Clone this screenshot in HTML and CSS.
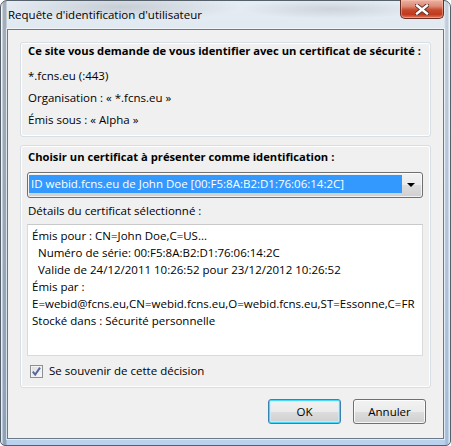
FILE: index.html
```html
<!DOCTYPE html>
<html lang="fr">
<head>
<meta charset="utf-8">
<title>Requête d'identification d'utilisateur</title>
<link rel="stylesheet" href="styles.css">
</head>
<body>
<div class="window">
  <div class="titlebar">
    <span class="title">Requête d'identification d'utilisateur</span>
    <div class="close">
      <svg width="14" height="11" viewBox="0 0 14 11">
        <path d="M2 1.5 L12 9.5 M12 1.5 L2 9.5" stroke="#5a2a22" stroke-width="4.2" stroke-linecap="square" fill="none"/>
        <path d="M2 1.5 L12 9.5 M12 1.5 L2 9.5" stroke="#ffffff" stroke-width="2.4" stroke-linecap="square" fill="none"/>
      </svg>
    </div>
  </div>
  <div class="client">
    <div class="group group-site">
      <div class="head">Ce site vous demande de vous identifier avec un certificat de sécurité :</div>
      <div class="line first">*.fcns.eu (:443)</div>
      <div class="line">Organisation : « *.fcns.eu »</div>
      <div class="line">Émis sous : « Alpha »</div>
    </div>
    <div class="group group-cert">
      <div class="head">Choisir un certificat à présenter comme identification :</div>
      <div class="combo">
        <div class="selection">ID webid.fcns.eu de John Doe [00:F5:8A:B2:D1:76:06:14:2C]</div>
        <div class="arrow"></div>
      </div>
      <div class="label">Détails du certificat sélectionné :</div>
      <div class="details">
        <div>Émis pour : CN=John Doe,C=US...</div>
        <div class="indent">Numéro de série: 00:F5:8A:B2:D1:76:06:14:2C</div>
        <div class="indent">Valide de 24/12/2011 10:26:52 pour 23/12/2012 10:26:52</div>
        <div>Émis par :</div>
        <div>E=webid@fcns.eu,CN=webid.fcns.eu,O=webid.fcns.eu,ST=Essonne,C=FR</div>
        <div>Stocké dans : Sécurité personnelle</div>
      </div>
      <div class="check">
        <span class="box">
          <svg width="11" height="11" viewBox="0 0 11 11">
            <path d="M1.8 5.6 L4.2 8.6 L9 1.6" stroke="#55679c" stroke-width="1.9" fill="none"/>
          </svg>
        </span>
        <span>Se souvenir de cette décision</span>
      </div>
    </div>
    <div class="buttons">
      <div class="btn default">OK</div>
      <div class="btn">Annuler</div>
    </div>
  </div>
</div>
</body>
</html>
```
FILE: styles.css
```css
html, body {
  margin: 0;
  padding: 0;
  background: #ffffff;
}
body {
  font-family: "Open Sans", "Noto Sans", "Liberation Sans", sans-serif;
  font-size: 11.5px;
  color: #000;
}
.window {
  width: 451px;
  height: 446px;
  box-sizing: border-box;
  border: 1px solid #56606b;
  border-radius: 7px 7px 5px 5px;
  display: flex;
  flex-direction: column;
  background:
    linear-gradient(to right, rgba(255,255,255,0.6) 0 1px, rgba(100,115,132,0.5) 2px 5px, transparent 6px),
    linear-gradient(to left, rgba(255,255,255,0.5) 0 1px, rgba(120,140,165,0.30) 2px 4px, transparent 6px),
    radial-gradient(ellipse 120px 14px at 120px 6px, rgba(120,128,138,0.28), transparent),
    radial-gradient(ellipse 90px 10px at 330px 8px, rgba(120,128,138,0.22), transparent),
    linear-gradient(to bottom, #e6ecf3 0, #d9e4ef 15%, #c9dbee 60%, #b9d2ed 100%);
}
.titlebar {
  height: 28px;
  display: flex;
  justify-content: space-between;
  align-items: flex-start;
  padding-left: 7px;
  padding-right: 6px;
}
.title {
  font-size: 11.5px;
  line-height: 16px;
  margin-top: 6px;
  color: #000;
}
.close {
  width: 44px;
  height: 19px;
  margin-top: -1px;
  box-sizing: border-box;
  border: 1px solid #6b2b20;
  border-top: none;
  border-radius: 0 0 5px 5px;
  background: linear-gradient(to bottom, #ebb3a3 0%, #dd8a74 35%, #c84a2e 55%, #c03a1d 80%, #e07a5b 100%);
  box-shadow: inset 0 0 0 1px rgba(255,200,185,0.45);
  display: flex;
  align-items: center;
  justify-content: center;
}
.close svg {
  display: block;
}
.client {
  margin: 0 6px 6px 6px;
  height: 410px;
  box-sizing: border-box;
  border: 1px solid #6c7886;
  box-shadow: 0 0 0 1px rgba(255,255,255,0.55);
  background: #f0f0f0;
  padding: 12px 12px 14px 12px;
  display: flex;
  flex-direction: column;
}
.group {
  border: 1px solid #d5dfe5;
  border-radius: 3px;
  box-shadow: inset 0 0 0 1px #ffffff;
  padding: 0 7px 0 6px;
  display: flex;
  flex-direction: column;
}
.group-site {
  height: 95px;
  box-sizing: border-box;
  padding-bottom: 8px;
}
.group-cert {
  height: 243px;
  box-sizing: border-box;
  margin-top: 8px;
  padding-top: 3px;
  padding-bottom: 8px;
}
.head {
  font-weight: bold;
  font-size: 11.2px;
  padding-left: 1px;
  line-height: 16px;
  height: 16px;
  white-space: nowrap;
}
.group-site .head {
  line-height: 15px;
  height: 15px;
}
.line {
  padding-left: 1px;
  line-height: 16px;
  height: 16px;
  margin-top: 6px;
  white-space: nowrap;
}
.line.first {
  margin-top: 10px;
}
.combo {
  margin-top: 7px;
  height: 26px;
  box-sizing: border-box;
  border: 1px solid #707070;
  border-radius: 3px;
  background: linear-gradient(to bottom, #f2f2f2 0%, #ebebeb 50%, #dddddd 51%, #cfcfcf 100%);
  box-shadow: inset 0 0 0 1px rgba(255,255,255,0.7);
  display: flex;
  align-items: flex-start;
  padding: 2px 0 0 1px;
}
.selection {
  width: 373px;
  height: 18px;
  line-height: 18px;
  background: #3399ff;
  color: #fff;
  padding-left: 2px;
  box-sizing: border-box;
  white-space: nowrap;
  overflow: hidden;
}
.arrow {
  width: 0;
  height: 0;
  border-left: 4px solid transparent;
  border-right: 4px solid transparent;
  border-top: 4px solid #000;
  margin-left: 5px;
  margin-top: 8px;
}
.label {
  margin-top: 5px;
  padding-left: 1px;
  line-height: 16px;
  height: 16px;
}
.details {
  margin-top: 5px;
  height: 132px;
  box-sizing: border-box;
  background: #fff;
  border: 1px solid #dadada;
  border-top-color: #c9c9c9;
  padding: 2px 0 0 4px;
  line-height: 17px;
  white-space: nowrap;
}
.details .indent {
  padding-left: 6px;
}
.check {
  margin-top: 7px;
  height: 16px;
  display: flex;
  align-items: center;
  padding-left: 3px;
  gap: 6px;
  line-height: 16px;
}
.box {
  width: 13px;
  height: 13px;
  box-sizing: border-box;
  border: 1px solid #8e8f8f;
  background: linear-gradient(135deg, #dcdcdc 0%, #fbfbfb 100%);
  box-shadow: inset 0 0 0 1px #f4f4f4;
  display: flex;
  align-items: center;
  justify-content: center;
}
.box svg {
  display: block;
}
.buttons {
  margin-top: 11px;
  display: flex;
  justify-content: flex-end;
  gap: 12px;
  padding-right: 5px;
}
.btn {
  width: 73px;
  height: 25px;
  box-sizing: border-box;
  border: 1px solid #707070;
  border-radius: 3px;
  background: linear-gradient(to bottom, #f2f2f2 0%, #ebebeb 50%, #dddddd 51%, #cfcfcf 100%);
  box-shadow: inset 0 0 0 1px rgba(255,255,255,0.8);
  display: flex;
  align-items: center;
  justify-content: center;
  line-height: 16px;
}
.btn.default {
  border-color: #3c7fb1;
  box-shadow: inset 0 0 0 1px #48d8fb, inset 0 0 0 2px rgba(200,240,252,0.7);
}
```
